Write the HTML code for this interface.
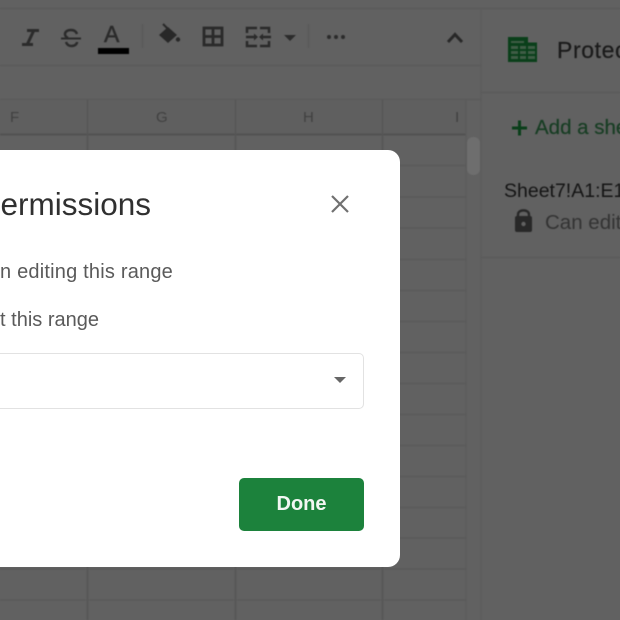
<!DOCTYPE html>
<html><head><meta charset="utf-8"><style>
html,body{margin:0;padding:0;width:620px;height:620px;overflow:hidden;background:#616161;font-family:"Liberation Sans",sans-serif}
.a{position:absolute}
.t{position:absolute;white-space:nowrap;line-height:1}
</style></head><body>
<div class="a" style="left:0;top:0;width:620px;height:620px;overflow:hidden;background:#616161">
<div class="a" style="left:0;top:0;width:620px;height:620px;filter:blur(.5px)">
<svg class="a" style="left:0;top:0" width="620" height="620" viewBox="0 0 620 620">
<rect x="0" y="100" width="466" height="34" fill="#5f5f5f"/>
<g stroke="#5a5a5a" stroke-width="1.2" fill="none">
<path d="M0 8.500H620M0 65.500H481M0 99.500H481M481 92.500H620M481 257.500H620"/>
<path d="M0 165.500H466M0 197H466M0 228H466M0 259.500H466M0 290.500H466M0 321.500H466M0 352.500H466M0 383.500H466M0 414.500H466M0 445.500H466M0 476.500H466M0 507.500H466M0 538H466M0 569H466M0 600H466"/>
</g>
<path d="M0 134.500H466" stroke="#525252" stroke-width="2"/>
<path d="M87.500 100V620M235.500 100V620M382.500 100V620" stroke="#565656" stroke-width="1.500"/>
<path d="M466 100V620M481 8V620" stroke="#5b5b5b" stroke-width="1.200"/>
<rect x="467" y="137" width="13" height="38" rx="6" fill="#6e6e6e"/>
<path d="M142.500 24V48M308.500 24V48" stroke="#585858" stroke-width="1.200"/>
<!-- italic -->
<path d="M27 30.500H39M22 44.500H33M34 30L27 45" stroke="#2b2b2b" stroke-width="3" fill="none"/>
<!-- strike -->
<path d="M61 38.500H81" stroke="#2b2b2b" stroke-width="2"/>
<path d="M77 34C76 31 74 30 71 30C67 30 65 32 65 34C65 36 66 37 68 38M66 42C67 45 69 46 71.500 46C75 46 77 44 77 42" stroke="#2b2b2b" stroke-width="2.500" fill="none"/>
<rect x="98" y="48" width="31" height="6" fill="#000"/>
<!-- fill -->
<path d="M159 35L168 27L177 35L168 43Z" fill="#282828"/>
<path d="M163 24L168 29" stroke="#282828" stroke-width="2"/>
<circle cx="178" cy="39.500" r="2.200" fill="#282828"/>
<!-- borders -->
<path d="M204 28H222V45H204ZM213 28V45M204 36.500H222" stroke="#2a2a2a" stroke-width="2.800" fill="none"/>
<!-- merge -->
<path d="M247 33V28H257M260 28H269V33M247 41V46H257M260 46H269V41M246 37H255M271 37H262" stroke="#2a2a2a" stroke-width="2.500" fill="none"/>
<path d="M254 33.500L258 37L254 40.500ZM263 33.500L259 37L263 40.500Z" fill="#2a2a2a"/>
<path d="M284 35H296L290 41Z" fill="#2b2b2b"/>
<circle cx="329" cy="37" r="2" fill="#2b2b2b"/><circle cx="336" cy="37" r="2" fill="#2b2b2b"/><circle cx="343" cy="37" r="2" fill="#2b2b2b"/>
<path d="M448 42L455 34.500L462 42" stroke="#282828" stroke-width="3" fill="none"/>
<!-- sheets icon -->
<path d="M508 37H528V42.500H537V62H508Z" fill="#0a3f1a"/>
<g fill="#3f5c46"><rect x="511" y="41" width="13" height="2"/><rect x="511" y="46" width="7" height="3"/><rect x="520" y="46" width="6" height="3"/><rect x="528" y="46" width="7" height="3"/><rect x="511" y="51" width="7" height="3"/><rect x="520" y="51" width="6" height="3"/><rect x="528" y="51" width="7" height="3"/><rect x="511" y="56" width="7" height="3"/><rect x="520" y="56" width="6" height="3"/><rect x="528" y="56" width="7" height="3"/></g>
<!-- plus -->
<path d="M519.500 120.500V135.500M512 128H527" stroke="#0a3f1a" stroke-width="3"/>
<!-- lock -->
<path d="M518 217V214.500C518 209 529 209 529 214.500V217" stroke="#282828" stroke-width="2.400" fill="none"/>
<rect x="515" y="216" width="17" height="16" rx="2" fill="#282828"/>
<circle cx="523.500" cy="224" r="2.200" fill="#616161"/>
</svg>
<div class="t" style="left:10px;top:110px;font-size:15px;color:#404040">F</div>
<div class="t" style="left:156px;top:110px;font-size:15px;color:#404040">G</div>
<div class="t" style="left:303px;top:110px;font-size:15px;color:#404040">H</div>
<div class="t" style="left:455px;top:110px;font-size:15px;color:#404040">I</div>
<div class="t" style="left:104px;top:23px;font-size:23px;color:#2b2b2b;-webkit-text-stroke:.5px #2b2b2b">A</div>
<div class="t" style="left:557px;top:39px;font-size:23px;color:#1a1a1a;letter-spacing:.6px;-webkit-text-stroke:.2px #1a1a1a">Protec</div>
<div class="t" style="left:535px;top:118px;font-size:20.500px;color:#173d23;-webkit-text-stroke:.2px #173d23">Add a sheet</div>
<div class="t" style="left:504px;top:182px;font-size:19.500px;color:#141414">Sheet7!A1:E1</div>
<div class="t" style="left:545px;top:213px;font-size:20.500px;color:#333">Can edit</div>
</div>
<div class="a" style="left:-40px;top:150px;width:440px;height:417px;background:#fff;border-radius:12px;overflow:hidden">
<div style="filter:blur(.3px)">
<div class="t" style="left:-20px;top:39px;font-size:31.500px;color:#303030;width:211px;text-align:right">ermissions</div>
<div class="t" style="left:0;top:112px;font-size:20px;letter-spacing:.2px;color:#5a5a5a;width:213px;text-align:right">n editing this range</div>
<div class="t" style="left:0;top:160px;font-size:20px;color:#5a5a5a;width:139px;text-align:right">t this range</div>
</div>
<div class="a" style="left:-10px;top:203px;width:412px;height:54px;border:1px solid #e2e2e2;border-radius:5px"></div>
<svg class="a" style="left:0;top:0" width="440" height="417"><path d="M372 46L388 62M388 46L372 62" stroke="#707070" stroke-width="2.200" fill="none"/><path d="M374 227H386L380 233Z" fill="#666"/></svg>
<div class="a" style="left:279px;top:328px;width:125px;height:53px;background:#1c823c;border-radius:5px;color:#f2f7f3;font-size:20px;font-weight:bold;text-align:center;line-height:52px;-webkit-font-smoothing:antialiased">Done</div>
</div>
</div>
</body></html>
